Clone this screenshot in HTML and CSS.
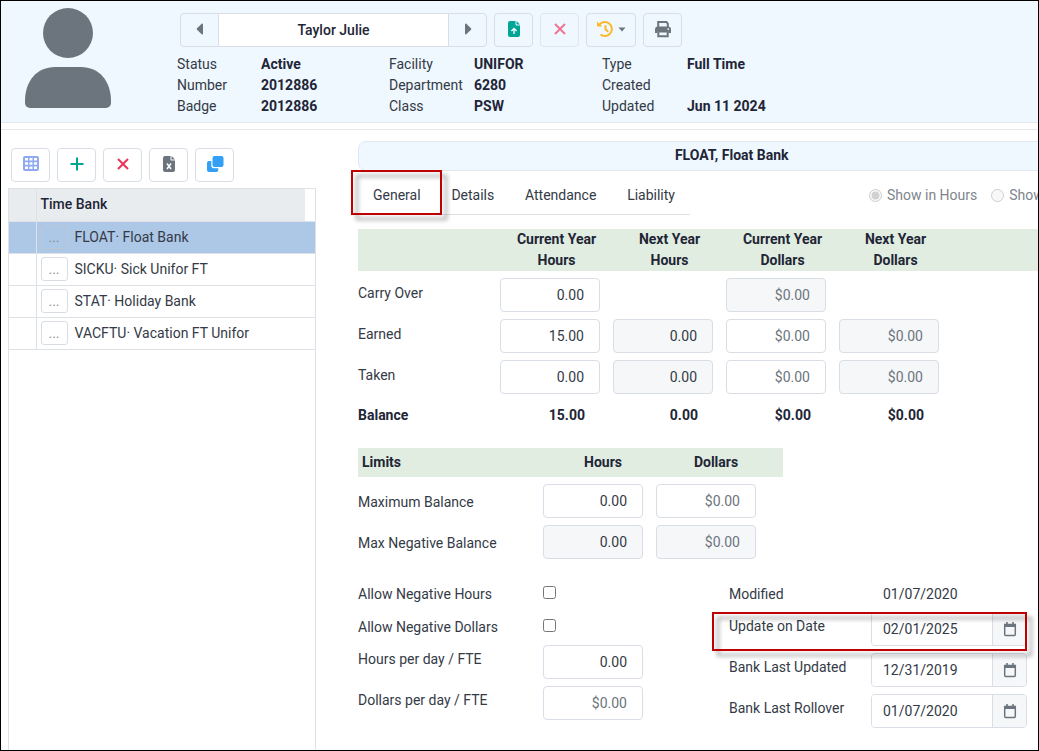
FILE: index.html
```
<!DOCTYPE html>
<html lang="en">

<head>
    <meta charset="UTF-8">
    <title>Time Bank</title>
    <link rel="stylesheet" href="styles.css">
</head>

<body>
    <svg class="sprite" aria-hidden="true">
        <symbol id="calendar" viewBox="0 0 14 16">
            <path d="M1.700 3.500h10.600v10a1 1 0 0 1-1 1H2.700a1 1 0 0 1-1-1z" fill="none" stroke="currentColor" stroke-width="1.500" />
            <path d="M1 3h12v3H1z" fill="currentColor" />
            <path d="M4 1v3M10 1v3" stroke="currentColor" stroke-width="1.600" />
        </symbol>
    </svg>

    <header class="employee">
        <svg class="avatar" viewBox="0 0 88 101" aria-hidden="true">
            <circle cx="44" cy="25" r="25" />
            <path d="M31 59h26c18 0 30 14 30 34v2a5 5 0 0 1-5 5H6a5 5 0 0 1-5-5v-2c0-20 12-34 30-34z" />
        </svg>
        <div class="employee-main">
            <div class="toolbar">
                <div class="navigator">
                    <button class="btn" aria-label="Previous"><svg width="16" height="16" viewBox="0 0 16 16"><path d="M11 3.300v9.400c0 .8-.8 1-1.300.6L5 8.700a1 1 0 0 1 0-1.400l4.700-4.600c.5-.4 1.300-.2 1.300.6z" /></svg></button>
                    <input type="text" value="Taylor Julie" aria-label="Employee">
                    <button class="btn" aria-label="Next"><svg width="16" height="16" viewBox="0 0 16 16"><path d="M5 3.300v9.400c0 .8.8 1 1.300.6L11 8.700a1 1 0 0 0 0-1.400L6.300 2.700C5.800 2.300 5 2.500 5 3.300z" /></svg></button>
                </div>
                <button class="btn green" aria-label="Upload"><svg width="16" height="18" viewBox="0 0 16 18"><path fill-rule="evenodd" d="M4 1h5.500v3.500a1 1 0 0 0 1 1H14V15a2 2 0 0 1-2 2H4a2 2 0 0 1-2-2V3a2 2 0 0 1 2-2zm6.500 0L14 4.500h-3.500zM7.300 14h1.400v-3.800l1.400 1.400 1-1L8 7.600l-3.100 3 1 1 1.400-1.400z" /></svg></button>
                <button class="btn red" disabled aria-label="Delete"><svg width="14" height="14" viewBox="0 0 14 14"><path class="line" d="M2 2l10 10M12 2L2 12" /></svg></button>
                <button class="btn amber wide" aria-label="History"><svg width="18" height="18" viewBox="0 0 18 18"><path class="line" d="M3.300 4.800A7 7 0 1 1 4.500 14.500M9.500 5.300v4l2.700 2.400" /><path d="M1 1.500l1.500 1.400 3.700 3.600H1z" /></svg><svg class="drop" width="8" height="5" viewBox="0 0 8 5"><path d="M.5.5h7L4 4.500z" /></svg></button>
                <button class="btn" aria-label="Print"><svg width="18" height="18" viewBox="0 0 18 18"><path class="line" d="M4.200 7V2h8.300l1.300 1.500V7" /><path fill-rule="evenodd" d="M4 6.500h10a3 3 0 0 1 3 3V13h-2.500v-2h-11v2H1V9.500a3 3 0 0 1 3-3zm10.200 1.700a.9.9 0 1 0 0 1.800.9.9 0 0 0 0-1.800z" /><path class="line" d="M4.300 11.500v4.700h9.400v-4.700z" /></svg></button>
            </div>
            <div class="facts">
                <span>Status</span><b>Active</b>
                <span>Facility</span><b>UNIFOR</b>
                <span>Type</span><b>Full Time</b>
                <span>Number</span><b>2012886</b>
                <span>Department</span><b>6280</b>
                <span>Created</span><b></b>
                <span>Badge</span><b>2012886</b>
                <span>Class</span><b>PSW</b>
                <span>Updated</span><b>Jun 11 2024</b>
            </div>
        </div>
    </header>

    <main>
        <aside class="banks">
            <div class="toolbar">
                <button class="btn blue" aria-label="Grid"><svg width="18" height="16" viewBox="0 0 18 16"><path fill-rule="evenodd" d="M3 0h12a2 2 0 0 1 2 2v11a2 2 0 0 1-2 2H3a2 2 0 0 1-2-2V2a2 2 0 0 1 2-2zM3 2v2.500h3V2zm4.500 0v2.500h3V2zM12 2v2.500h3V2zM3 6.200v2.600h3V6.200zm4.500 0v2.600h3V6.200zm4.500 0v2.600h3V6.200zM3 10.500V13h3v-2.500zm4.500 0V13h3v-2.500zm4.500 0V13h3v-2.500z" /></svg></button>
                <button class="btn green" aria-label="Add"><svg width="14" height="14" viewBox="0 0 14 14"><path class="line" d="M7 .5v13M.5 7h13" /></svg></button>
                <button class="btn red" aria-label="Remove"><svg width="14" height="14" viewBox="0 0 14 14"><path class="line" d="M2 2l10 10M12 2L2 12" /></svg></button>
                <button class="btn" aria-label="Export"><svg width="16" height="18" viewBox="0 0 16 18"><path d="M4 1h5.500v3.500a1 1 0 0 0 1 1H14V15a2 2 0 0 1-2 2H4a2 2 0 0 1-2-2V3a2 2 0 0 1 2-2zm6.500 0L14 4.500h-3.500z" /><path d="M6 8.500l4 5.500M10 8.500L6 14" stroke="#fff" stroke-width="1.500" /></svg></button>
                <button class="btn sky" aria-label="Copy"><svg width="18" height="18" viewBox="0 0 18 18"><rect x="6.500" y="1" width="11" height="11" rx="2" /><path d="M3 6h2.300v4.500A2.700 2.700 0 0 0 8 13.200h4.300V15a2 2 0 0 1-2 2H3a2 2 0 0 1-2-2V8a2 2 0 0 1 2-2z" /></svg></button>
            </div>
            <div class="bank-grid">
                <table>
                    <thead>
                        <tr><th class="handle"></th><th>Time Bank</th><th class="scroll"></th></tr>
                    </thead>
                    <tbody>
                        <tr class="selected"><td></td><td colspan="2"><button class="more">...</button>FLOAT· Float Bank</td></tr>
                        <tr><td></td><td colspan="2"><button class="more">...</button>SICKU· Sick Unifor FT</td></tr>
                        <tr><td></td><td colspan="2"><button class="more">...</button>STAT· Holiday Bank</td></tr>
                        <tr><td></td><td colspan="2"><button class="more">...</button>VACFTU· Vacation FT Unifor</td></tr>
                    </tbody>
                </table>
            </div>
        </aside>

        <section class="detail">
            <h1>FLOAT, Float Bank</h1>
            <div class="tab-row">
                <nav class="tabs">
                    <a class="marked" href="#general">General</a>
                    <a href="#details">Details</a>
                    <a href="#attendance">Attendance</a>
                    <a href="#liability">Liability</a>
                </nav>
                <div class="units">
                    <label><input type="radio" name="unit" checked disabled>Show in Hours</label>
                    <label><input type="radio" name="unit" disabled>Show in Dollars</label>
                </div>
            </div>

            <table class="years">
                <thead>
                    <tr>
                        <th class="name"></th>
                        <th>Current Year<br>Hours</th>
                        <th>Next Year<br>Hours</th>
                        <th>Current Year<br>Dollars</th>
                        <th>Next Year<br>Dollars</th>
                        <th class="rest"></th>
                    </tr>
                </thead>
                <tbody>
                    <tr>
                        <td><label for="carry">Carry Over</label></td>
                        <td><input class="field" type="text" id="carry" value="0.00"></td>
                        <td></td>
                        <td><input class="field money" type="text" value="$0.00" disabled aria-label="Carry over dollars"></td>
                        <td></td>
                        <td></td>
                    </tr>
                    <tr>
                        <td><label for="earned">Earned</label></td>
                        <td><input class="field" type="text" id="earned" value="15.00"></td>
                        <td><input class="field" type="text" value="0.00" disabled aria-label="Earned next year hours"></td>
                        <td><input class="field money" type="text" value="$0.00" aria-label="Earned dollars"></td>
                        <td><input class="field money" type="text" value="$0.00" disabled aria-label="Earned next year dollars"></td>
                        <td></td>
                    </tr>
                    <tr>
                        <td><label for="taken">Taken</label></td>
                        <td><input class="field" type="text" id="taken" value="0.00"></td>
                        <td><input class="field" type="text" value="0.00" disabled aria-label="Taken next year hours"></td>
                        <td><input class="field money" type="text" value="$0.00" aria-label="Taken dollars"></td>
                        <td><input class="field money" type="text" value="$0.00" disabled aria-label="Taken next year dollars"></td>
                        <td></td>
                    </tr>
                    <tr class="balance">
                        <td>Balance</td>
                        <td>15.00</td>
                        <td>0.00</td>
                        <td>$0.00</td>
                        <td>$0.00</td>
                        <td></td>
                    </tr>
                </tbody>
            </table>

            <table class="limits">
                <thead>
                    <tr>
                        <th class="name">Limits</th>
                        <th>Hours</th>
                        <th>Dollars</th>
                        <th class="rest"></th>
                    </tr>
                </thead>
                <tbody>
                    <tr>
                        <td><label for="max">Maximum Balance</label></td>
                        <td><input class="field" type="text" id="max" value="0.00"></td>
                        <td><input class="field money" type="text" value="$0.00" aria-label="Maximum dollars"></td>
                        <td></td>
                    </tr>
                    <tr>
                        <td><label for="maxneg">Max Negative Balance</label></td>
                        <td><input class="field" type="text" id="maxneg" value="0.00" disabled></td>
                        <td><input class="field money" type="text" value="$0.00" disabled aria-label="Max negative dollars"></td>
                        <td></td>
                    </tr>
                </tbody>
            </table>

            <div class="options">
                <div class="option-list">
                    <div class="line-row"><label for="neghours">Allow Negative Hours</label><input type="checkbox" id="neghours"></div>
                    <div class="line-row"><label for="negdollars">Allow Negative Dollars</label><input type="checkbox" id="negdollars"></div>
                    <div class="field-row"><label for="hoursday">Hours per day / FTE</label><input class="field" type="text" id="hoursday" value="0.00"></div>
                    <div class="field-row"><label for="dollarsday">Dollars per day / FTE</label><input class="field money" type="text" id="dollarsday" value="$0.00"></div>
                </div>
                <div class="option-list dates">
                    <div class="line-row"><span class="caption">Modified</span><span class="value">01/07/2020</span></div>
                    <div class="field-row marked">
                        <label for="updateon">Update on Date</label>
                        <div class="date"><input type="text" id="updateon" value="02/01/2025"><button aria-label="Pick date"><svg width="14" height="16"><use href="#calendar" /></svg></button></div>
                    </div>
                    <div class="field-row">
                        <label for="lastupdated">Bank Last Updated</label>
                        <div class="date"><input type="text" id="lastupdated" value="12/31/2019"><button aria-label="Pick date"><svg width="14" height="16"><use href="#calendar" /></svg></button></div>
                    </div>
                    <div class="field-row">
                        <label for="rollover">Bank Last Rollover</label>
                        <div class="date"><input type="text" id="rollover" value="01/07/2020"><button aria-label="Pick date"><svg width="14" height="16"><use href="#calendar" /></svg></button></div>
                    </div>
                </div>
            </div>
        </section>
    </main>
</body>

</html>
```

FILE: styles.css
```
*,
*::after {
    box-sizing: border-box;
}

body {
    display: flex;
    flex-direction: column;
    min-height: 100vh;
    margin: 0;
    border: 1px solid #000;
    overflow: hidden;
    font-family: Roboto, Arial, sans-serif;
    font-size: 14px;
    line-height: 21px;
    color: #343a46;
    background-color: #fff;
}

button,
input {
    font: inherit;
    color: inherit;
}

table {
    border-collapse: collapse;
    table-layout: fixed;
}

th,
td {
    padding: 0;
    text-align: left;
}

b,
th,
h1,
.balance {
    font-weight: 700;
    color: #212536;
}

.sprite {
    position: absolute;
    width: 0;
    height: 0;
}

/* employee header */
.employee {
    display: flex;
    gap: 65px;
    padding: 7px 24px 5px 23px;
    border-bottom: 1px solid #e4e8ec;
    background-color: #eff7ff;
}

.avatar {
    width: 88px;
    height: 101px;
    fill: #6c757d;
}

.employee-main {
    padding-top: 5px;
}

.toolbar {
    display: flex;
    gap: 7px;
    padding-left: 3px;
}

.btn {
    display: flex;
    align-items: center;
    justify-content: center;
    width: 39px;
    height: 34px;
    padding: 0 0 2px;
    border: 1px solid #d8dde6;
    border-radius: 4px;
    background: none;
    color: #6c757d;
    cursor: pointer;
}

.btn svg {
    fill: currentColor;
}

.btn .line {
    fill: none;
    stroke: currentColor;
    stroke-width: 2;
}

.btn:disabled {
    opacity: 0.65;
}

.wide {
    width: 50px;
    gap: 4px;
}

.drop {
    color: #6c757d;
}

.green {
    color: #00a693;
}

.red {
    color: #ee3158;
}

.amber {
    color: #fdb827;
}

.blue {
    color: #8faaf2;
}

.sky {
    color: #339ff5;
}

.navigator {
    display: flex;
}

.navigator .btn:first-child {
    border-radius: 4px 0 0 4px;
}

.navigator .btn:last-child {
    border-radius: 0 4px 4px 0;
}

.navigator input {
    width: 229px;
    padding: 0;
    border: solid #d8dde6;
    border-width: 1px 0;
    background-color: #fff;
    font-weight: 500;
    color: #212536;
    text-align: center;
}

.facts {
    display: grid;
    grid-template-columns: 84px 128px 85px 128px 85px auto;
    padding-top: 7px;
    white-space: nowrap;
}

/* body */
main {
    display: flex;
    flex: 1;
    gap: 42px;
    margin-top: 6px;
    border-top: 1px solid #e4e8ec;
}

.banks {
    display: flex;
    flex: 0 0 308px;
    flex-direction: column;
    gap: 6px;
    margin-left: 7px;
    padding-top: 18px;
}

.bank-grid {
    flex: 1;
    border: 1px solid #dee2e6;
    border-bottom: 0;
}

.bank-grid table {
    width: 100%;
}

.bank-grid tr {
    height: 32px;
    border-bottom: 1px solid #dee2e6;
}

.bank-grid th {
    background-color: #e9ecef;
    font-weight: 500;
}

.bank-grid th:nth-child(2),
.bank-grid td:nth-child(2) {
    padding-left: 4px;
    border-left: 1px solid #dee2e6;
}

.bank-grid .handle {
    width: 27px;
}

.bank-grid .scroll {
    width: 10px;
    background-color: #fff;
}

.bank-grid .selected {
    background-color: #adc7e7;
}

.more {
    width: 27px;
    height: 24px;
    margin-right: 7px;
    padding: 0;
    border: 1px solid #d8dde6;
    border-radius: 3px;
    background: none;
    color: #868e96;
}

.selected .more {
    border-color: #bcc8d8;
}

.detail {
    flex: 1 0 743px;
    padding-top: 11px;
}

h1 {
    margin: 0;
    padding: 3px 0 4px;
    border: 1px solid #dfe8f0;
    border-radius: 8px;
    background-color: #eff7ff;
    font-size: 14px;
    line-height: 21px;
    text-align: center;
}

.tab-row {
    display: flex;
    gap: 179px;
    height: 44px;
}

.tabs {
    display: flex;
    flex: 0 0 332px;
    justify-content: space-between;
    padding: 14px 15px 0;
    border-bottom: 1px solid #dee2e6;
}

.tabs a {
    height: 21px;
    color: inherit;
    text-decoration: none;
}

.units {
    display: flex;
    align-items: flex-start;
    gap: 14px;
    padding-top: 14px;
    color: #7d858d;
    white-space: nowrap;
}

.units label {
    display: flex;
    align-items: center;
    gap: 5px;
}

.units input,
.option-list input[type="checkbox"] {
    width: 13px;
    height: 13px;
    margin: 0;
}

.years,
.limits {
    width: 100%;
}

.years {
    margin-top: 14px;
}

.years thead,
.limits thead {
    background-color: #e1ede0;
}

.years th {
    width: 113px;
    height: 42px;
    text-align: center;
}

.years .name {
    width: 142px;
}

.years .rest,
.limits .rest {
    width: auto;
}

.years td,
.limits td {
    padding-top: 7px;
    vertical-align: top;
}

.years label {
    display: block;
    padding-top: 5px;
}

.years .balance td {
    padding: 11px 28px 0 0;
    text-align: right;
}

.years .balance td:first-child {
    text-align: left;
}

.field {
    display: block;
    width: 100px;
    height: 34px;
    padding: 0 15px;
    border: 1px solid #d8dde6;
    border-radius: 4px;
    background-color: #fff;
    text-align: right;
}

.field:disabled {
    background-color: #f6f7f9;
}

.money {
    color: #6c757d;
}

.limits {
    width: 425px;
    margin-top: 22px;
}

.limits th {
    width: 113px;
    height: 29px;
    padding-left: 7px;
    text-align: center;
}

.limits .name {
    width: 185px;
    padding-left: 4px;
    text-align: left;
}

.limits label {
    display: block;
    padding-top: 8px;
}

.options {
    display: grid;
    grid-template-columns: 371px 1fr;
    padding-top: 20px;
}

.option-list {
    display: grid;
    align-content: start;
}

.line-row,
.field-row {
    display: grid;
    grid-template-columns: 185px 1fr;
}

.line-row {
    height: 33px;
    padding-top: 5px;
}

.line-row input[type="checkbox"] {
    margin-top: 2px;
}

.field-row {
    height: 41px;
}

.field-row label {
    padding-top: 4px;
}

.dates .line-row,
.dates .field-row {
    grid-template-columns: 142px 156px;
}

.value {
    padding-left: 12px;
}

.date {
    display: flex;
    height: 34px;
    border: 1px solid #d8dde6;
    border-radius: 4px;
    overflow: hidden;
}

.date input {
    flex: 1;
    min-width: 0;
    padding: 0 11px;
    border: 0;
}

.date button {
    display: flex;
    align-items: center;
    justify-content: center;
    width: 34px;
    padding: 0;
    border: 0;
    border-left: 1px solid #d8dde6;
    background-color: #f6f7f9;
    color: #6c757d;
}

/* red call-out frames */
.marked {
    position: relative;
}

.marked::after {
    content: "";
    position: absolute;
    border: 2px solid #c00000;
    filter: drop-shadow(5px 5px 2px rgba(0, 0, 0, 0.4));
    pointer-events: none;
}

.tabs .marked::after {
    inset: -15px -21px -9px -22px;
}

.field-row.marked::after {
    top: 0;
    left: -17px;
    width: 315px;
    height: 39px;
}
```
